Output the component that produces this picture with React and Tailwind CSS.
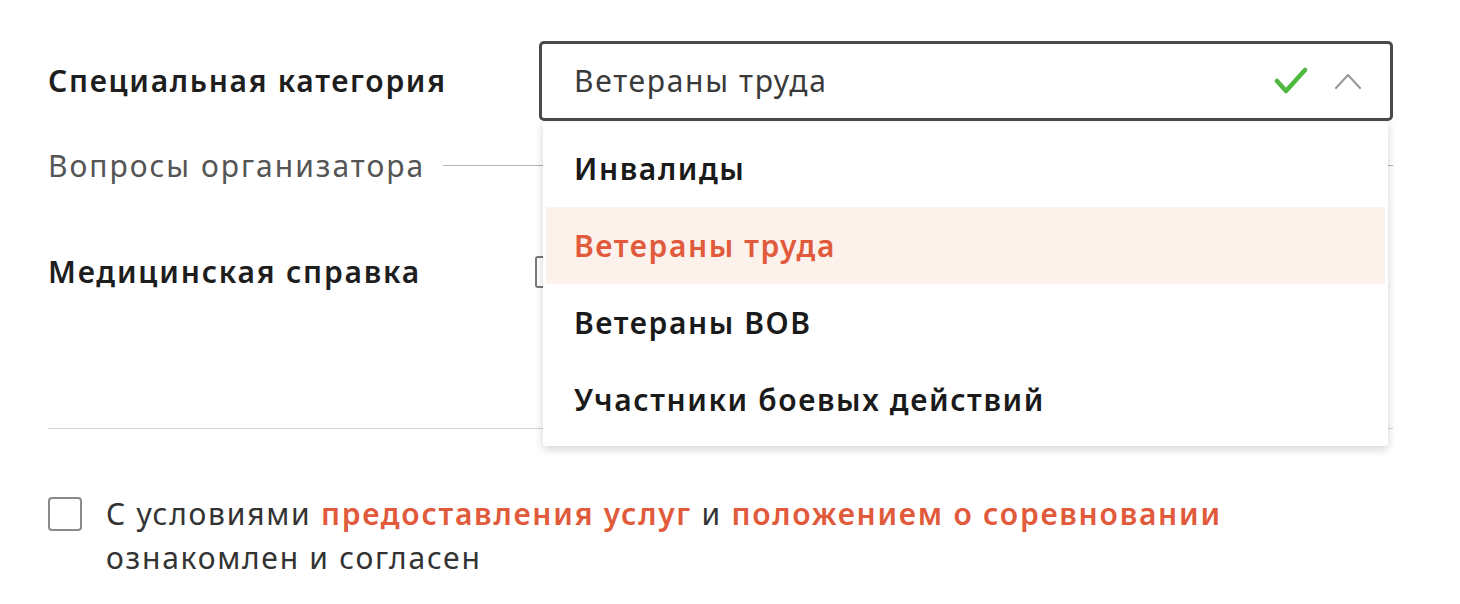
import React from "react";

const font = { fontFamily: '"Noto Sans", "Open Sans", sans-serif' };

function Check() {
  return (
    <svg width="34" height="28" viewBox="0 0 34 28" fill="none">
      <path d="M3 14 L12 24 L31 3" stroke="#4fb83f" strokeWidth="4.5" strokeLinecap="round" strokeLinejoin="round" />
    </svg>
  );
}

function ChevronUp() {
  return (
    <svg width="28" height="20" viewBox="0 0 28 20" fill="none">
      <path d="M2 17 L14 4 L26 17" stroke="#9a9a9a" strokeWidth="2.2" strokeLinecap="round" strokeLinejoin="round" />
    </svg>
  );
}

const items = ["Инвалиды", "Ветераны труда", "Ветераны ВОВ", "Участники боевых действий"];

export default function App() {
  return (
    <div className="w-[1460px] h-[604px] bg-white overflow-hidden" style={font}>
      <div className="pl-[48px] pr-[67px] pt-[41px]">
        {/* Row 1 */}
        <div className="flex items-center h-[80px]">
          <div className="w-[491px] text-[30px] font-semibold text-[#1e1e1e] tracking-[1.7px] whitespace-nowrap -mt-[2px]">Специальная категория</div>
          <div className="relative flex-1">
            <div className="h-[80px] border-[3px] border-[#4a4a4a] rounded-[5px] flex items-center pl-[32px] pr-[28px]">
              <span className="flex-1 text-[30px] text-[#3a3a3a] tracking-[1.7px] -mt-[2px]">Ветераны труда</span>
              <span className="mr-[26px] flex items-center"><Check /></span>
              <span className="flex items-center"><ChevronUp /></span>
            </div>
            <div className="absolute left-[4px] right-[5px] top-[81px] bg-white z-10 py-[8px] px-[3px] shadow-[0_3px_10px_rgba(0,0,0,0.18)] rounded-[2px]">
              {items.map((it) => (
                <div
                  key={it}
                  className={
                    it === "Ветераны труда"
                      ? "h-[77px] flex items-center pl-[28px] bg-[#fdf1ec] text-[#e05a3b] text-[30px] font-semibold tracking-[1.6px]"
                      : "h-[77px] flex items-center pl-[28px] text-[#1a1a1a] text-[30px] font-semibold tracking-[1.6px]"
                  }
                >
                  {it}
                </div>
              ))}
            </div>
          </div>
        </div>

        {/* Row 2 */}
        <div className="flex items-center h-[40px] mt-[24px]">
          <span className="text-[30px] text-[#555555] tracking-[2px] whitespace-nowrap">Вопросы организатора</span>
          <div className="flex-1 h-px bg-[#b5b5b5] ml-[18px]"></div>
        </div>

        {/* Row 3 */}
        <div className="flex items-center h-[40px] mt-[67px]">
          <div className="w-[487px] text-[30px] font-semibold text-[#1e1e1e] tracking-[1.8px] whitespace-nowrap -mt-[2px]">Медицинская справка</div>
          <div className="w-[34px] h-[32px] border-2 border-[#7a7a7a] rounded-[3px]"></div>
        </div>

        {/* Divider */}
        <div className="h-px bg-[#d4d4d4] mt-[136px]"></div>

        {/* Agreement */}
        <div className="flex items-start mt-[63px]">
          <div className="w-[34px] h-[34px] border-2 border-[#8a8a8a] rounded-[4px] mt-[5px] shrink-0"></div>
          <div className="ml-[24px] text-[30px] leading-[44px] text-[#333333] tracking-[1.75px] whitespace-nowrap">
            <span>С условиями </span>
            <span className="text-[#e05a3b] font-semibold">предоставления услуг</span>
            <span> и </span>
            <span className="text-[#e05a3b] font-semibold">положением о соревновании</span>
            <br />
            <span>ознакомлен и согласен</span>
          </div>
        </div>
      </div>
    </div>
  );
}
